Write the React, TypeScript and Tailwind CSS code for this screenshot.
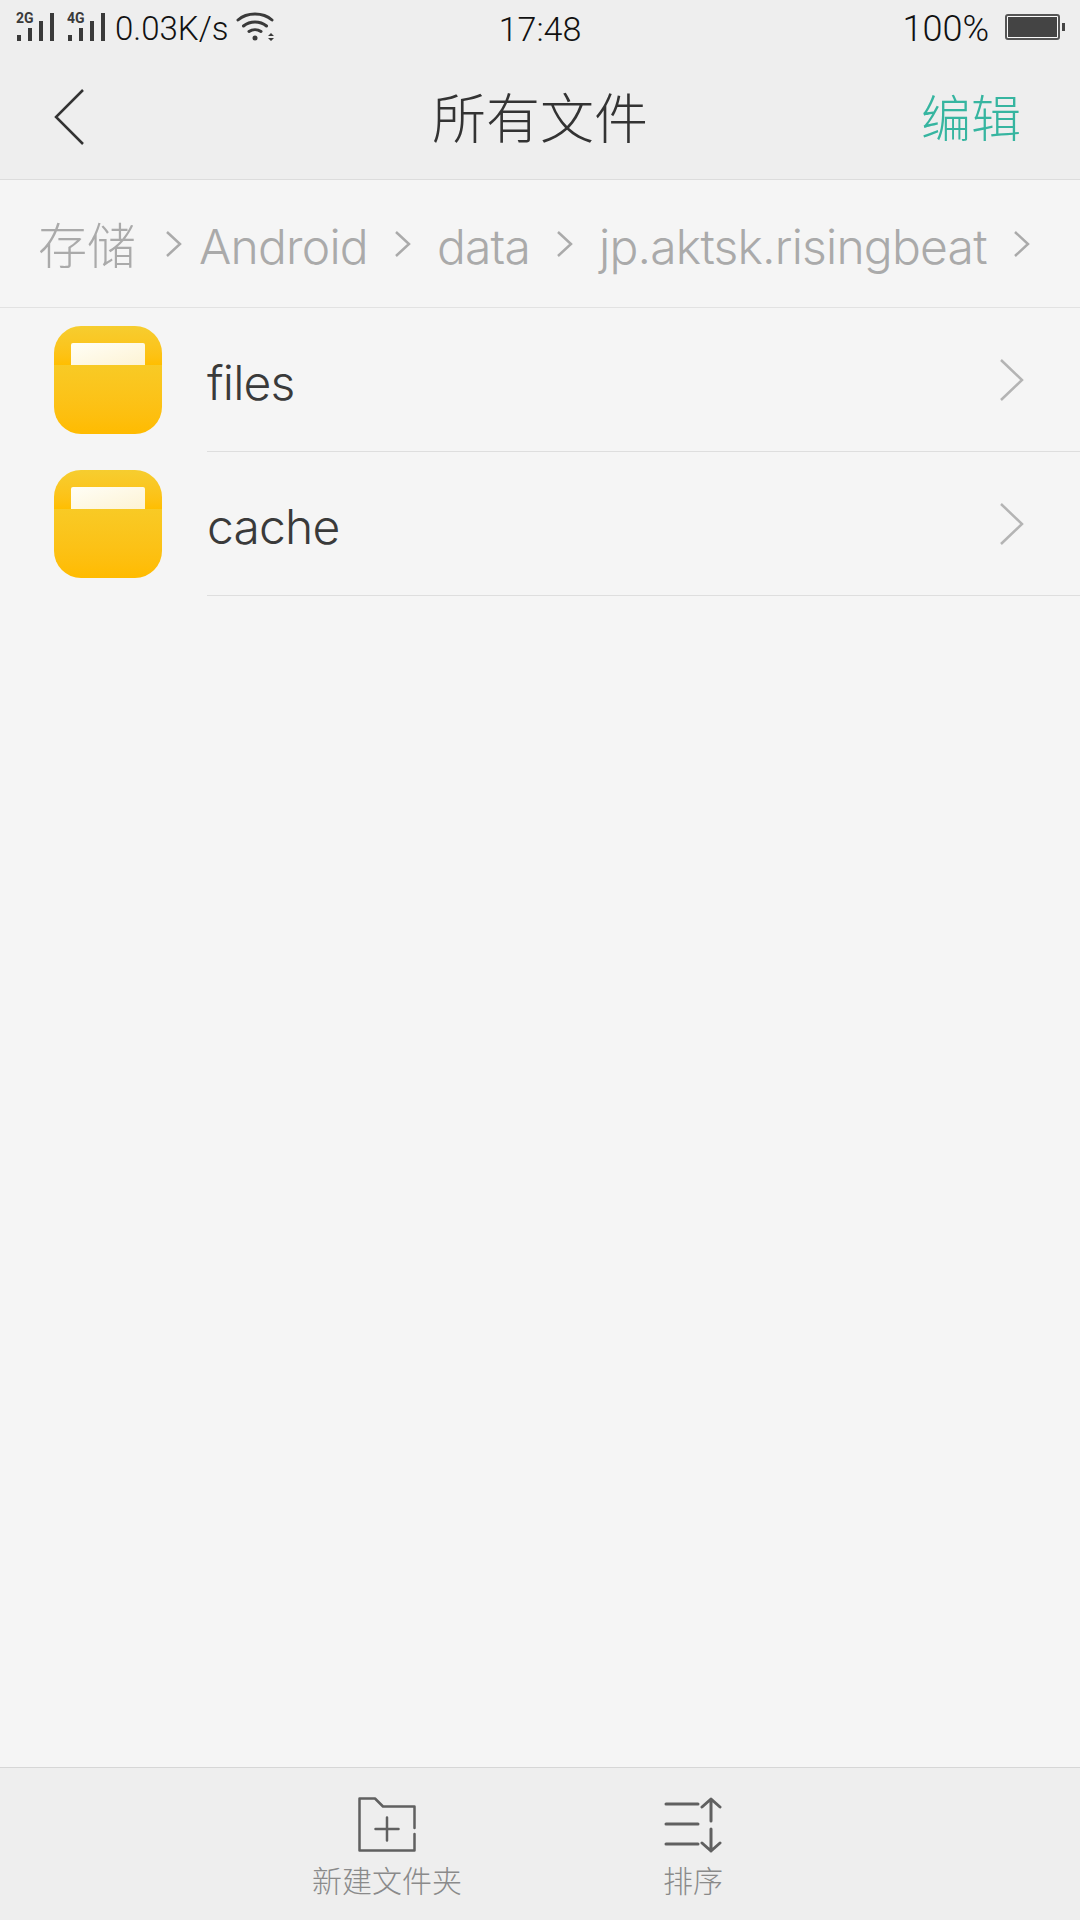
const cjk = '"Noto Sans CJK SC", sans-serif';
const listFont = { fontFamily: `"Inter", ${cjk}` };
const statusFont = { fontFamily: `"Roboto", ${cjk}` };

function Signal({ label, className }: { label: string; className?: string }) {
  return (
    <svg width="50" height="42" viewBox="0 0 50 42" className={`shrink-0 mb-[15px] ${className ?? ""}`}>
      <text x="0" y="23" fontSize="14" fontWeight="700" fill="#3a3a3a" fontFamily="Roboto, sans-serif">
        {label}
      </text>
      <rect x="1" y="35" width="4" height="6" fill="#3a3a3a" />
      <rect x="12" y="28" width="4" height="13" fill="#3a3a3a" />
      <rect x="23" y="21" width="4" height="20" fill="#3a3a3a" />
      <rect x="34" y="13" width="4" height="28" fill="#3a3a3a" />
    </svg>
  );
}

function Wifi() {
  return (
    <svg width="40" height="30" viewBox="0 0 40 30" fill="none" stroke="#3a3a3a" strokeWidth="3" strokeLinecap="round" className="mb-[3px]">
      <path d="M2 8C11 0 27 0 36 8" />
      <path d="M7.500 14C14 8.500 24 8.500 30.500 14" />
      <path d="M13 19.500C16.500 17 21.500 17 25 19.500" />
      <circle cx="19" cy="26" r="2.500" fill="#3a3a3a" stroke="none" />
      <path d="M32 24l3-3 3 3zM32 26l3 3 3-3z" fill="#3a3a3a" stroke="none" />
    </svg>
  );
}

function Chevron({ className, w, h, color, sw }: { className?: string; w: number; h: number; color: string; sw: number }) {
  return (
    <svg width={w} height={h} viewBox={`0 0 ${w} ${h}`} fill="none" stroke={color} strokeWidth={sw} className={className}>
      <path d={`M1 1L${w - 2} ${h / 2}L1 ${h - 1}`} />
    </svg>
  );
}

function FolderIcon() {
  return (
    <div className="w-[108px] h-[108px] shrink-0 rounded-[27px] overflow-hidden">
      <div className="h-[39px] pt-[17px] px-[17px] bg-gradient-to-b from-[#f6cd2f] to-[#ffbe00]">
        <div className="h-[22px] rounded-t-[2px] bg-gradient-to-br from-[#fffef6] to-[#fdf3d4]" />
      </div>
      <div className="h-[69px] bg-gradient-to-b from-[#f8ca25] to-[#ffbb00]" />
    </div>
  );
}

function Row({ name }: { name: string }) {
  return (
    <div className="flex h-[144px] pl-[54px]">
      <div className="flex items-center mt-[-1px]">
        <FolderIcon />
      </div>
      <div className="flex-1 ml-[45px] flex items-center justify-between border-b border-[#dedede] pr-[56px]">
        <span className="text-[48px] font-light tracking-[-0.8px] text-[#3a3a3a] leading-none mt-[6px]">{name}</span>
        <Chevron w={24} h={42} color="#b4b4b4" sw={2.500} />
      </div>
    </div>
  );
}

export default function App() {
  return (
    <div style={listFont} className="w-[1080px] h-[1920px] flex flex-col bg-[#f5f5f5] overflow-hidden">
      <div className="bg-[#eeeeee] h-[180px] border-b border-[#dcdcdc] shrink-0">
        <div style={statusFont} className="h-[57px] relative flex items-center justify-between pl-[16px] pr-[15px] text-[#111]">
          <div className="flex items-center">
            <Signal label="2G" className="mr-[1px]" />
            <Signal label="4G" />
            <span className="text-[33px] font-light ml-[-2px] mr-[7px]">0.03K/s</span>
            <Wifi />
          </div>
          <span className="absolute left-0 right-0 text-center text-[34px] font-light mt-[1px]">17:48</span>
          <div className="flex items-center">
            <span className="text-[36px] font-light mr-[16px] mt-[1px]">100%</span>
            <div className="w-[55px] h-[26px] mb-[4px] border-2 border-[#555] rounded-[3px] p-[1px] bg-[#fafafa]">
              <div className="w-full h-full bg-[#444]" />
            </div>
            <div className="w-[3px] h-[8px] mb-[4px] bg-[#444] ml-[2px]" />
          </div>
        </div>
        <div className="h-[122px] flex items-center justify-between pl-[54px] pr-[59px] relative">
          <Chevron w={30} h={56} color="#333" sw={2.500} className="rotate-180 mt-[-2px]" />
          <span className="absolute left-0 right-0 text-center text-[54px] text-[#333] font-light mt-[3px]">所有文件</span>
          <span className="text-[50px] font-light text-[#36b5a0] mt-[3px]">编辑</span>
        </div>
      </div>

      <div className="h-[128px] border-b border-[#e2e2e2] flex items-center pl-[38px] text-[48px] font-light tracking-[-0.8px] text-[#aaaaaa] shrink-0 whitespace-nowrap">
        <span className="mt-[6px] text-[49px] tracking-normal">存储</span>
        <Chevron w={16} h={26} color="#aaa" sw={2.500} className="ml-[30px] mr-[17px]" />
        <span className="mt-[6px]">Android</span>
        <Chevron w={16} h={26} color="#aaa" sw={2.500} className="ml-[27px] mr-[26px]" />
        <span className="mt-[6px]">data</span>
        <Chevron w={16} h={26} color="#aaa" sw={2.500} className="ml-[27px] mr-[26px]" />
        <span className="mt-[6px]">jp.aktsk.risingbeat</span>
        <Chevron w={16} h={26} color="#aaa" sw={2.500} className="ml-[27px]" />
      </div>

      <Row name="files" />
      <Row name="cache" />

      <div className="flex-1" />

      <div className="h-[153px] bg-[#eeeeee] border-t border-[#d6d6d6] shrink-0 flex pl-[312px] pt-[29px]">
        <div className="w-[150px] flex flex-col items-center">
          <svg width="58" height="56" viewBox="0 0 58 56" fill="none" stroke="#606060" strokeWidth="2.500" strokeLinejoin="round" strokeLinecap="round">
            <path d="M56.500 37V53.500H1.500V1.500H17L25 9.500H56.500V31" />
            <path d="M17.500 32H40.500M29 20.500V43.500" />
          </svg>
          <span className="text-[30px] font-light text-[#8a8a8a] leading-none mt-[13px]">新建文件夹</span>
        </div>
        <div className="w-[58px] ml-[202px] flex flex-col items-center">
          <svg width="58" height="56" viewBox="0 0 58 56" fill="none" stroke="#606060" strokeWidth="3" strokeLinecap="round" strokeLinejoin="round">
            <path d="M2 7H34M2 27H34M2 47H34" />
            <path d="M47 24V2M38 10L47 2L56 10M47 32V54M38 46L47 54L56 46" />
          </svg>
          <span className="text-[30px] font-light text-[#8a8a8a] leading-none mt-[13px] whitespace-nowrap">排序</span>
        </div>
      </div>
    </div>
  );
}
